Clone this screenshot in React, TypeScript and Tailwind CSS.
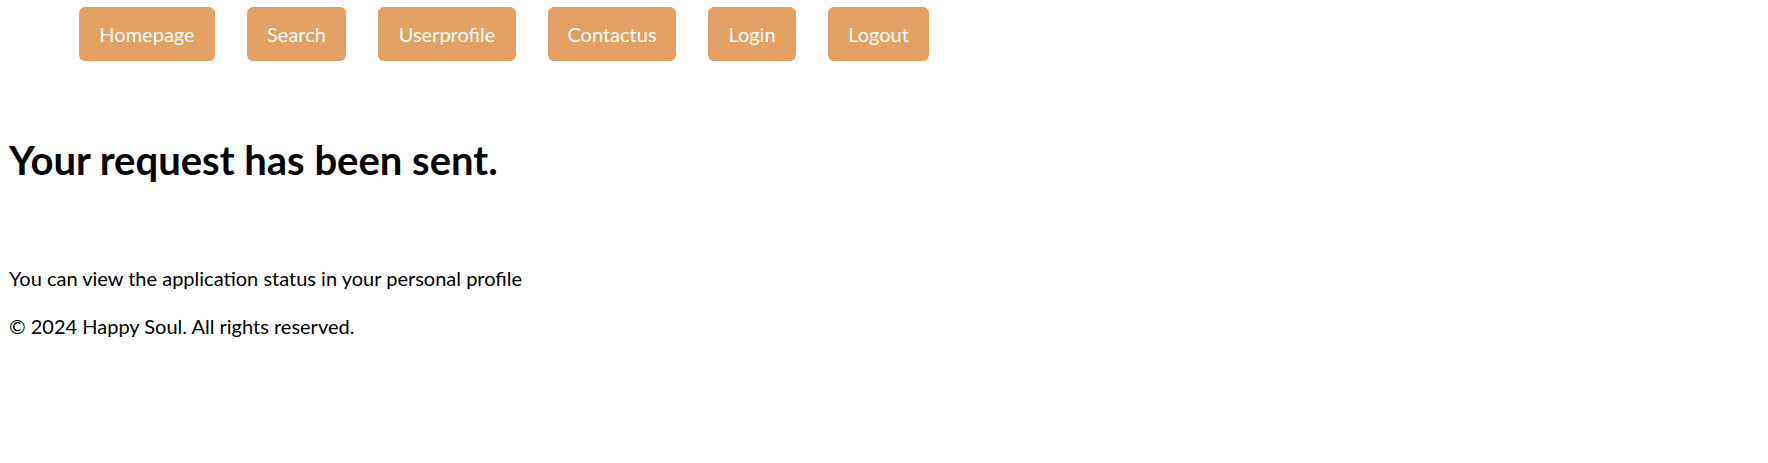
import React from "react";

const links = [
  { label: "Homepage", w: "w-[136px]" },
  { label: "Search", w: "w-[99px]" },
  { label: "Userprofile", w: "w-[138px]" },
  { label: "Contactus", w: "w-[128px]" },
  { label: "Login", w: "w-[88px]" },
  { label: "Logout", w: "w-[101px]" },
];

export default function App() {
  return (
    <div className="min-h-screen bg-white text-black font-['Lato',sans-serif]">
      {/* Navigation */}
      <nav className="flex gap-[32px] pl-[79px] pt-[7px]">
        {links.map((l) => (
          <a
            key={l.label}
            href="#"
            className={`${l.w} h-[54px] flex items-center justify-center rounded-[6px] bg-[#e49f63] text-white text-[20px]`}
          >
            {l.label}
          </a>
        ))}
      </nav>

      <main className="px-[9px]">
        <h1 className="mt-[75px] text-[40px] leading-[48px] font-bold">Your request has been sent.</h1>
        <p className="mt-[82px] text-[20px] leading-[24px]">
          You can view the application status in your personal profile
        </p>
        <footer className="mt-[24px] text-[20px] leading-[24px]">
          © 2024 Happy Soul. All rights reserved.
        </footer>
      </main>
    </div>
  );
}
